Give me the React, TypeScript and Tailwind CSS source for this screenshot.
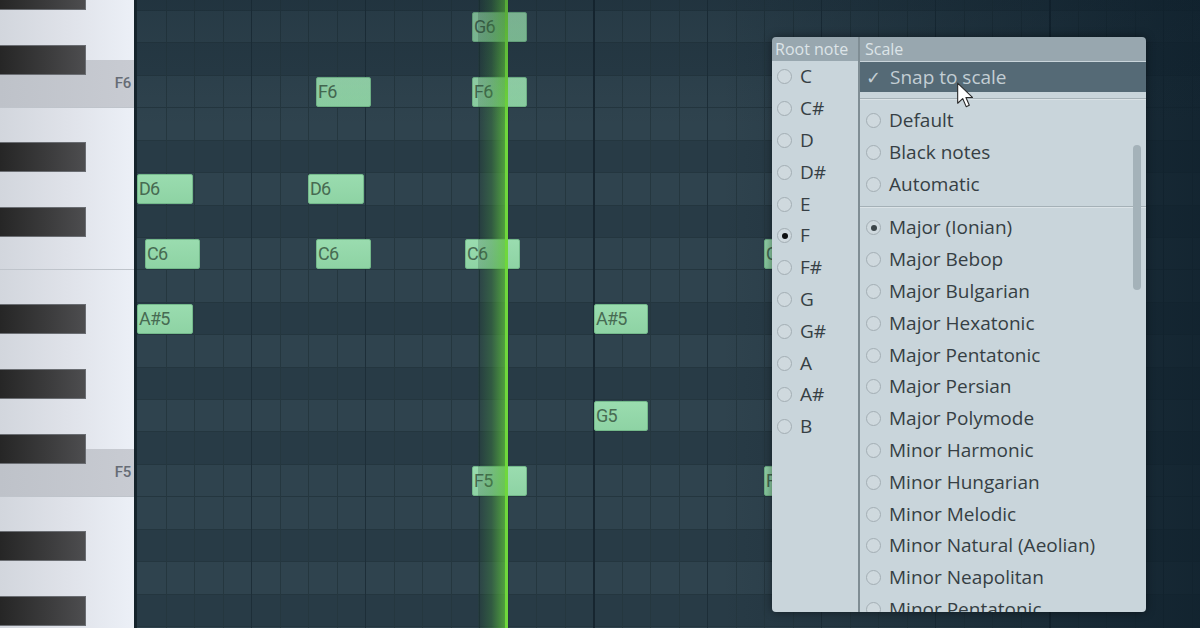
import React from 'react';

const ROW = 32.43;
const TOP = -21.43;

const rows = ['G#6', 'G6', 'F#6', 'F6', 'E6', 'D#6', 'D6', 'C#6', 'C6', 'B5', 'A#5', 'A5', 'G#5', 'G5', 'F#5', 'F5', 'E5', 'D#5', 'D5', 'C#5', 'C5'];

const whiteKeys = [
  { name: 'A6', tall: true },
  { name: 'G6', tall: true },
  { name: 'F6', tall: false },
  { name: 'E6', tall: false },
  { name: 'D6', tall: true },
  { name: 'C6', tall: false },
  { name: 'B5', tall: false },
  { name: 'A5', tall: true },
  { name: 'G5', tall: true },
  { name: 'F5', tall: false },
  { name: 'E5', tall: false },
  { name: 'D5', tall: true },
  { name: 'C5', tall: false },
  { name: 'B4', tall: false },
];

// x in page pixels, row = note name
const notes = [
  { x: 472, w: 55, row: 'G6' },
  { x: 316, w: 55, row: 'F6' },
  { x: 472, w: 55, row: 'F6' },
  { x: 137, w: 56, row: 'D6' },
  { x: 308, w: 56, row: 'D6' },
  { x: 145, w: 55, row: 'C6' },
  { x: 316, w: 55, row: 'C6' },
  { x: 465, w: 55, row: 'C6' },
  { x: 764, w: 55, row: 'C6' },
  { x: 137, w: 56, row: 'A#5' },
  { x: 594, w: 54, row: 'A#5' },
  { x: 594, w: 54, row: 'G5' },
  { x: 472, w: 55, row: 'F5' },
  { x: 764, w: 55, row: 'F5' },
];

const rootNotes = ['C', 'C#', 'D', 'D#', 'E', 'F', 'F#', 'G', 'G#', 'A', 'A#', 'B'];

const scales = [
  'Major (Ionian)',
  'Major Bebop',
  'Major Bulgarian',
  'Major Hexatonic',
  'Major Pentatonic',
  'Major Persian',
  'Major Polymode',
  'Minor Harmonic',
  'Minor Hungarian',
  'Minor Melodic',
  'Minor Natural (Aeolian)',
  'Minor Neapolitan',
  'Minor Pentatonic',
];

const rowTop = (name: string) => TOP + ROW * rows.indexOf(name);

function Radio({ checked, soft }: { checked?: boolean; soft?: boolean }) {
  return (
    <div className="w-[15px] h-[15px] shrink-0 rounded-full border border-[#a3aeb4] bg-[#cfd9de] flex items-center justify-center">
      {checked && <div className={`w-[6px] h-[6px] rounded-full ${soft ? 'bg-[#3b4549]' : 'bg-[#0d0f10]'}`} />}
    </div>
  );
}

function Piano() {
  return (
    <div className="relative w-[134px] shrink-0 overflow-hidden">
      <div className="mt-[-70.08px] flex flex-col">
        {whiteKeys.map((k) => {
          const isF = k.name[0] === 'F';
          const edge = k.name[0] === 'F' || k.name[0] === 'C';
          return (
            <div
              key={k.name}
              className={`${k.tall ? 'h-[64.86px]' : 'h-[48.65px]'} shrink-0 flex items-center justify-end pr-[3px] ${
                edge ? 'border-b border-[#bfc4cb]' : ''
              } ${
                isF
                  ? 'bg-gradient-to-r from-[#bec2c9] to-[#c8cbd2]'
                  : 'bg-gradient-to-r from-[#d2d6dd] via-[#dfe2e9] to-[#ecf0f7]'
              }`}
            >
              {isF && <span className="text-[15px] font-medium text-[#666c75] font-['Roboto',sans-serif] tracking-[-0.3px]">{k.name}</span>}
            </div>
          );
        })}
      </div>
      {rows.map((r) =>
        r.includes('#') ? (
          <div
            key={r}
            className="absolute left-0 w-[86px] h-[30px] border border-[#6a6d72] border-l-0 bg-gradient-to-r from-[#262626] to-[#4d4d4f]"
            style={{ top: rowTop(r) + 1.2 }}
          />
        ) : null
      )}
    </div>
  );
}

function Grid() {
  const cols = Array.from({ length: 38 }, (_, i) => i);
  return (
    <div className="relative flex-1 overflow-hidden bg-[#2c404b]">
      <div className="mt-[-21.43px] flex flex-col">
        {rows.map((r) => (
          <div
            key={r}
            className={`h-[32.43px] shrink-0 border-b border-[#24363f] ${r.includes('#') ? 'bg-[#283b46]' : 'bg-[#2f434e]'}`}
          />
        ))}
      </div>
      <div className="absolute inset-0 flex">
        {cols.map((c) => (
          <div
            key={c}
            className={`w-[28.5px] shrink-0 ${
              c === 0 ? '' : c % 16 === 0 ? 'border-l-2 border-[#172630]' : c % 4 === 0 ? 'border-l border-[#1d2e38]' : 'border-l border-[#25373f]'
            }`}
          />
        ))}
      </div>
      <div className="absolute inset-0">
        {notes.map((n, i) => (
          <div
            key={i}
            className="absolute h-[30px] rounded-[2px] border border-[#74b98b] bg-gradient-to-b from-[#9adcaf] to-[#8ed3a4] flex items-center pl-[1px] overflow-hidden"
            style={{ left: n.x - 137, top: rowTop(n.row) + 1.2, width: n.w }}
          >
            <span className="text-[18px] text-[#476b52] font-['Roboto',sans-serif] tracking-[-0.8px] leading-none">{n.row}</span>
          </div>
        ))}
      </div>
      {/* playhead */}
      <div className="absolute top-0 bottom-0 left-[341px] w-[30px] flex">
        <div className="w-[28px] bg-gradient-to-r from-[#1e3a2c]/20 via-[#3f8a3a]/40 to-[#5cc03a]/75" />
        <div className="w-[3px] bg-[#6fd73c]" />
      </div>
      <div className="absolute inset-0 bg-gradient-to-r from-transparent via-transparent via-55% to-[#0d1e2a]/80 pointer-events-none" />
      <div className="absolute inset-0 bg-gradient-to-b from-[#0d1e2a]/25 via-transparent via-20% to-transparent pointer-events-none" />
    </div>
  );
}

function ScaleMenu() {
  return (
    <div className="absolute left-[772px] top-[37px] w-[374px] h-[575px] rounded-[4px] overflow-hidden flex shadow-[0_0_10px_rgba(0,0,0,0.45)] font-['Open_Sans','Noto_Sans',sans-serif]">
      <div className="w-[86px] shrink-0 flex flex-col">
        <div className="h-[24px] shrink-0 bg-[#98a7af] text-[#dde4e8] text-[16px] leading-[24px] pl-[3px]">Root note</div>
        <div className="flex-1 bg-[#c9d5db] flex flex-col">
          {rootNotes.map((n) => (
            <div key={n} className="h-[31.8px] shrink-0 flex items-center gap-[8px] pl-[5px] text-[19px] text-[#363f44]">
              <Radio checked={n === 'F'} />
              <span className="leading-none">{n}</span>
            </div>
          ))}
        </div>
      </div>
      <div className="w-[2px] shrink-0 bg-[#7f8d94]" />
      <div className="relative flex-1 flex flex-col">
        <div className="h-[24px] shrink-0 bg-[#98a7af] text-[#dde4e8] text-[16px] leading-[24px] pl-[5px]">Scale</div>
        <div className="flex-1 bg-[#c9d5db] flex flex-col">
          <div className="mt-[1px] h-[30px] shrink-0 bg-[#556a76] flex items-center pl-[6px] text-[19px] text-[#c3ced4]">
            <span className="w-[24px] font-['DejaVu_Sans',sans-serif] text-[18px]">✓</span>
            <span className="leading-none">Snap to scale</span>
          </div>
          <div className="mt-[6px] h-[2px] shrink-0 border-t border-[#a5b1b7] border-b border-b-[#dbe3e7]" />
          <div className="mt-[4px] flex flex-col">
            {['Default', 'Black notes', 'Automatic'].map((s) => (
              <div key={s} className="h-[32px] shrink-0 flex items-center gap-[8px] pl-[6px] text-[19px] text-[#363f44]">
                <Radio />
                <span className="leading-none">{s}</span>
              </div>
            ))}
          </div>
          <div className="mt-[6px] h-[2px] shrink-0 border-t border-[#a5b1b7] border-b border-b-[#dbe3e7]" />
          <div className="mt-[4px] flex flex-col">
            {scales.map((s, i) => (
              <div key={s} className="h-[31.8px] shrink-0 flex items-center gap-[8px] pl-[6px] text-[19px] text-[#363f44] whitespace-nowrap">
                <Radio checked={i === 0} soft />
                <span className="leading-none">{s}</span>
              </div>
            ))}
          </div>
        </div>
        <div className="absolute right-[5px] top-[108px] w-[8px] h-[145px] rounded-full bg-[#a4b2b9]" />
      </div>
    </div>
  );
}

function Cursor() {
  return (
    <svg className="absolute left-[956px] top-[82px]" width="19" height="28" viewBox="0 0 16 25">
      <path d="M1 1 L1 19 L5.5 14.8 L8.6 22 L11.4 20.8 L8.4 13.8 L14.2 13.8 Z" fill="#ffffff" stroke="#2a2a2a" strokeWidth="1" strokeLinejoin="round" />
    </svg>
  );
}

export default function App() {
  return (
    <div className="relative w-[1200px] h-[628px] overflow-hidden flex bg-[#1b2c36]">
      <Piano />
      <div className="w-[3px] shrink-0 bg-[#15242c]" />
      <Grid />
      <ScaleMenu />
      <Cursor />
    </div>
  );
}
